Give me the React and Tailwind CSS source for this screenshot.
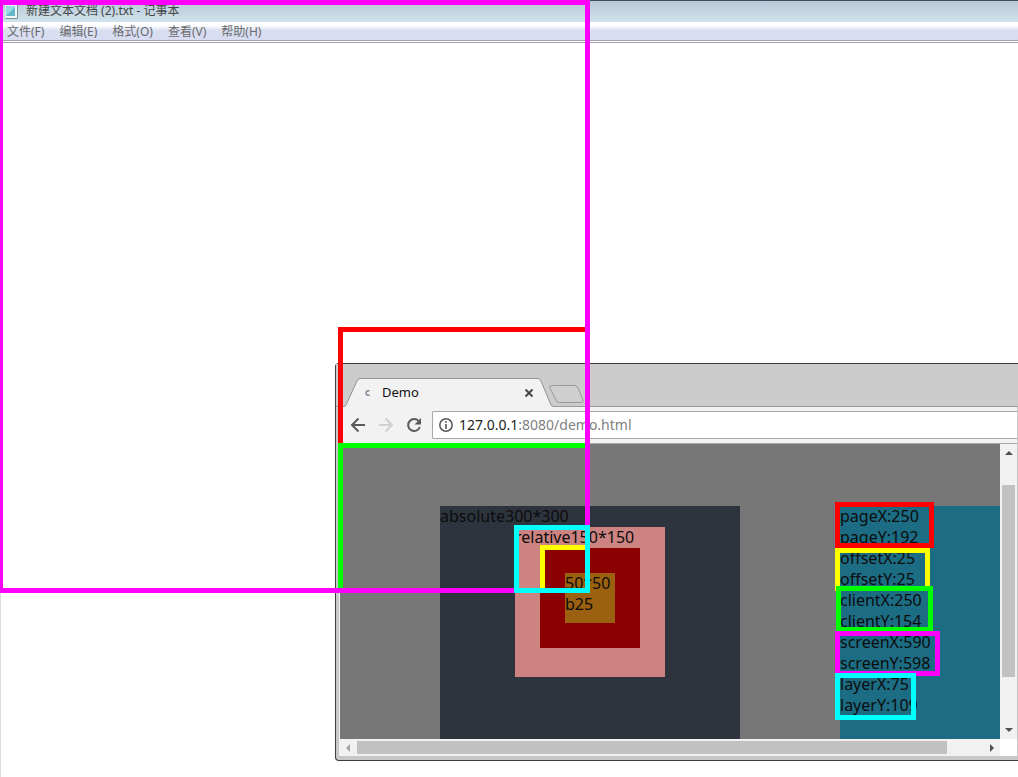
const menus = ["文件(F)", "编辑(E)", "格式(O)", "查看(V)", "帮助(H)"];

const readings = [
  "pageX:250",
  "pageY:192",
  "offsetX:25",
  "offsetY:25",
  "clientX:250",
  "clientY:154",
  "screenX:590",
  "screenY:598",
  "layerX:75",
  "layerY:109",
];

// areas measured from each origin to the pointer, then the boxes round the readings
const frames = [
  "left-[338px] top-[327px] w-[250px] h-[118px] border-t-5 border-l-5 border-[#ff0000]",
  "left-[338px] top-[443px] w-[250px] h-[148px] border-t-5 border-l-5 border-[#00ff00]",
  "left-[-2px] top-0 w-[592px] h-[593px] border-5 border-[#ff00ff]",
  "left-[540px] top-[545px] w-[48px] h-[45px] border-t-5 border-l-5 border-[#ffff00]",
  "left-[514px] top-[525px] w-[76px] h-[68px] border-5 border-[#00ffff]",
  "left-[835px] top-[502px] w-[99px] h-[46px] border-5 border-[#ff0000]",
  "left-[835px] top-[548px] w-[95px] h-[43px] border-5 border-[#ffff00]",
  "left-[836px] top-[586px] w-[97px] h-[46px] border-5 border-[#00ff00]",
  "left-[835px] top-[631px] w-[105px] h-[45px] border-5 border-[#ff00ff]",
  "left-[835px] top-[673px] w-[81px] h-[47px] border-5 border-[#00ffff]",
];

const Notepad = () => (
  <div className="flex min-h-[777px] flex-col border-l border-[#dcdcdc] text-xs font-['Noto_Sans','Noto_Sans_CJK_SC',sans-serif]">
    <div className="flex h-[22px] items-center gap-2 border-t border-[#3f4a5c] bg-linear-to-b from-[#b9c8d8] to-[#cfe3ec] pb-0.5 pl-1 text-[#444]">
      <svg width="13" height="16" viewBox="0 0 13 16">
        <path d="M.5 1h12v14.500H.5z" fill="#eef6f7" />
        <path d="M12.500 1v14.500H.5" fill="none" stroke="#7b8f99" />
        <path d="M1 3h9v10H1z" fill="#9adbe3" />
        <path d="M1 13l9-9v9z" fill="#62b7c8" />
      </svg>
      <span>新建文本文档 (2).txt - 记事本</span>
    </div>
    <div className="flex h-[21px] items-center gap-[15px] border-b-3 border-double border-[#a3a3ad] bg-linear-to-b from-white from-20% via-[#d9e0f0] via-45% to-[#d8dcf2] pt-0.5 pl-1.5 text-[#6a6a6e]">
      {menus.map((m) => (
        <button key={m}>{m}</button>
      ))}
    </div>
    <div className="flex-1 bg-white" />
  </div>
);

const TabStrip = () => (
  <div className="flex h-[43px] items-end border-b border-[#9a9a9a] bg-[#cccccc] pl-[9px]">
    <div className="relative -mb-px flex h-[29px] w-[208px] items-center">
      <svg className="absolute inset-0" width="208" height="29" viewBox="0 0 208 29">
        <path d="M0 28.500L1 27L12 3Q13 .5 15 .5H193Q195 .5 196 3L206 27L208 28.500V29H0z" fill="#f2f2f2" />
        <path d="M0 28.500L1 27L12 3Q13 .5 15 .5H193Q195 .5 196 3L206 27L208 28.500" fill="none" stroke="#929292" />
      </svg>
      <svg className="relative ml-[18px]" width="8" height="8" viewBox="0 0 8 8">
        <path d="M6.500 2A2.300 2.300 0 1 0 6.500 6" fill="none" stroke="#85859a" strokeWidth="1.500" />
      </svg>
      <span className="relative ml-[11px] flex-1 text-[13px] text-[#111]">Demo</span>
      <button className="relative mr-[19px]" aria-label="Close tab">
        <svg width="10" height="10" viewBox="0 0 10 10">
          <path d="M1.500 1.500l7 7m0-7l-7 7" stroke="#444" strokeWidth="1.800" />
        </svg>
      </button>
    </div>
    <button className="mb-[3px] -ml-1" aria-label="New tab">
      <svg width="36" height="19" viewBox="0 0 36 19">
        <path d="M3 1.500H26Q28 1.500 29 4L34 16Q35 18.500 32 18.500H10Q8 18.500 7 16L1 4Q0 1.500 3 1.500z" fill="#cfcfcf" stroke="#9a9a9a" />
      </svg>
    </button>
  </div>
);

const Toolbar = () => (
  <div className="flex h-[37px] items-center border-b border-[#a8a8a8] bg-[#f2f2f2] pl-[11px]">
    <button aria-label="Back">
      <svg width="16" height="16" viewBox="0 0 16 16" fill="none" stroke="#5a5a5a" strokeWidth="2">
        <path d="M15 8H2.500M8.500 1.500L2 8l6.500 6.500" />
      </svg>
    </button>
    <button className="ml-3" aria-label="Forward">
      <svg width="16" height="16" viewBox="0 0 16 16" fill="none" stroke="#d0d0d0" strokeWidth="2">
        <path d="M1 8h12.500M7.500 1.500L14 8l-6.500 6.500" />
      </svg>
    </button>
    <button className="ml-3" aria-label="Reload">
      <svg width="16" height="16" viewBox="0 0 16 16">
        <path d="M13 4.500A6 6 0 1 0 13.800 10" fill="none" stroke="#5a5a5a" strokeWidth="2" />
        <path d="M15 1v6.500H8.500z" fill="#5a5a5a" />
      </svg>
    </button>
    <div className="ml-[10px] flex h-7 flex-1 items-center gap-1.5 rounded-l-xs border border-r-0 border-[#a9a9a9] bg-white pl-1.5">
      <svg width="14" height="14" viewBox="0 0 14 14">
        <circle cx="7" cy="7" r="6.200" fill="none" stroke="#555" strokeWidth="1.500" />
        <path d="M7 6v5M7 3v1.800" stroke="#555" strokeWidth="1.600" />
      </svg>
      <span className="pb-0.5 text-[14px] text-[#808080]">
        <span className="text-[#222]">127.0.0.1</span>:8080/demo.html
      </span>
    </div>
  </div>
);

const Arrow = ({ d, color }) => (
  <svg width="8" height="8" viewBox="0 0 8 8">
    <path d={d} fill={color} />
  </svg>
);

const Page = () => (
  <div className="flex h-[295px] flex-1 overflow-hidden bg-[#777777] pt-[62px] pl-[100px] text-base leading-[21px] text-[#0c0c0c]">
    <div className="h-[300px] w-[300px] shrink-0 bg-[#2d343e]">
      <p>absolute300*300</p>
      <div className="ml-[75px] h-[150px] w-[150px] bg-[#cd8381]">
        <p>relative150*150</p>
        <div className="ml-[25px] h-[100px] w-[100px] bg-[#8b0000] p-[25px]">
          <div className="h-[50px] w-[50px] bg-[#9b6110]">
            50*50
            <br />
            b25
          </div>
        </div>
      </div>
    </div>
    <div className="ml-[100px] h-[300px] flex-1 bg-[#1c6c84]">
      {readings.map((r) => (
        <p key={r}>{r}</p>
      ))}
    </div>
  </div>
);

const Browser = () => (
  <div className="absolute top-[363px] right-0 left-[335px] rounded-l-sm border border-r-0 border-[#3c3c3c] bg-[#c8c8c8] pb-1 font-['Noto_Sans','Open_Sans',sans-serif]">
    <TabStrip />
    <div className="ml-[3px] mr-px">
      <Toolbar />
      <div className="border-l border-[#f2f2f2]">
        <div className="flex">
          <Page />
          <div className="flex w-[17px] flex-col items-center bg-[#f1f1f1] py-[5px]">
            <Arrow d="M0 6l4-4 4 4z" color="#505050" />
            <div className="mt-7 h-[192px] w-[13px] bg-[#c1c1c1]" />
            <div className="flex-1" />
            <Arrow d="M0 2l4 4 4-4z" color="#505050" />
          </div>
        </div>
        <div className="flex h-[17px] bg-white">
          <div className="flex flex-1 items-center bg-[#f1f1f1] px-1">
            <Arrow d="M6 0L2 4l4 4z" color="#a3a3a3" />
            <div className="ml-[5px] h-[13px] w-[590px] bg-[#c1c1c1]" />
            <div className="flex-1" />
            <Arrow d="M2 0l4 4-4 4z" color="#505050" />
          </div>
          <div className="w-[17px]" />
        </div>
      </div>
    </div>
  </div>
);

const App = () => {
  return (
    <div className="relative overflow-hidden bg-white">
      <Notepad />
      <Browser />
      {frames.map((f) => (
        <div key={f} className={`pointer-events-none absolute ${f}`} />
      ))}
    </div>
  );
};

export default App;
